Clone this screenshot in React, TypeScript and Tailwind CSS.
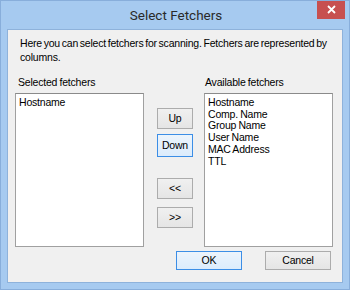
import React from "react";

const font = { fontFamily: '"Liberation Sans", Arial, sans-serif' };

function Btn({ label, focused, className }: { label: string; focused?: boolean; className?: string }) {
  return (
    <div
      className={
        "flex items-center justify-center text-[10.5px] tracking-[-0.2px] text-black border " +
        (focused
          ? "border-[#3c8ee6] bg-gradient-to-b from-[#ecf4fc] to-[#dcecfc] "
          : "border-[#acacac] bg-gradient-to-b from-[#f0f0f0] to-[#e5e5e5] ") +
        (className || "")
      }
    >
      {label}
    </div>
  );
}

export default function App() {
  const avail = ["Hostname", "Comp. Name", "Group Name", "User Name", "MAC Address", "TTL"];
  return (
    <div className="w-[350px] h-[290px] bg-[#a6caf0] border border-[#88aedb] flex flex-col overflow-hidden" style={font}>
      <div className="h-[28px] flex items-start relative shrink-0">
        <div
          className="flex-1 text-center text-[13.5px] text-[#2a2a2a] pt-[4px] pl-[2px]"
          style={{ fontFamily: 'Roboto, "Noto Sans", sans-serif' }}
        >
          Select Fetchers
        </div>
        <div className="absolute right-[4px] top-[-1px] w-[28px] h-[19px] bg-[#c75050] flex items-center justify-center">
          <svg width="9" height="9" viewBox="0 0 9 9">
            <path d="M1 1L8 8M8 1L1 8" stroke="white" strokeWidth="1.8" />
          </svg>
        </div>
      </div>
      <div className="mx-[6px] mb-[6px] flex-1 bg-[#f0f0f0] border border-[#8eb2db] flex flex-col pl-[7px] pr-[9px] text-[10.5px] tracking-[-0.2px] [word-spacing:-0.5px] text-black">
        <p className="leading-[14px] mt-[6px] ml-[5px] [word-spacing:-1px]">
          Here you can select fetchers for scanning. Fetchers are represented by
          <br />
          columns.
        </p>
        <div className="flex mt-[12px] leading-[13px]">
          <div className="w-[189px] pl-[3px]">Selected fetchers</div>
          <div className="pl-[1px]">Available fetchers</div>
        </div>
        <div className="flex items-start mt-[4px]">
          <div className="w-[129px] h-[154px] bg-white border border-[#a0a0a0] border-t-[#8a8a8a] px-[3px] pt-[3px] leading-[11.7px]">
            Hostname
          </div>
          <div className="w-[36px] ml-[13px] flex flex-col mt-[15px]">
            <Btn label="Up" className="h-[21px]" />
            <Btn label="Down" focused className="h-[23px] mt-[5px]" />
            <Btn label="<<" className="h-[21px] mt-[21px]" />
            <Btn label=">>" className="h-[21px] mt-[8px]" />
          </div>
          <div className="w-[129px] h-[154px] ml-[11px] bg-white border border-[#a0a0a0] border-t-[#8a8a8a] px-[3px] pt-[3px] leading-[11.7px]">
            {avail.map((a) => (
              <div key={a}>{a}</div>
            ))}
          </div>
        </div>
        <div className="flex mt-[4px] pl-[161px]">
          <Btn label="OK" focused className="w-[66px] h-[19px]" />
          <Btn label="Cancel" className="w-[66px] h-[19px] ml-[23px]" />
        </div>
      </div>
    </div>
  );
}
